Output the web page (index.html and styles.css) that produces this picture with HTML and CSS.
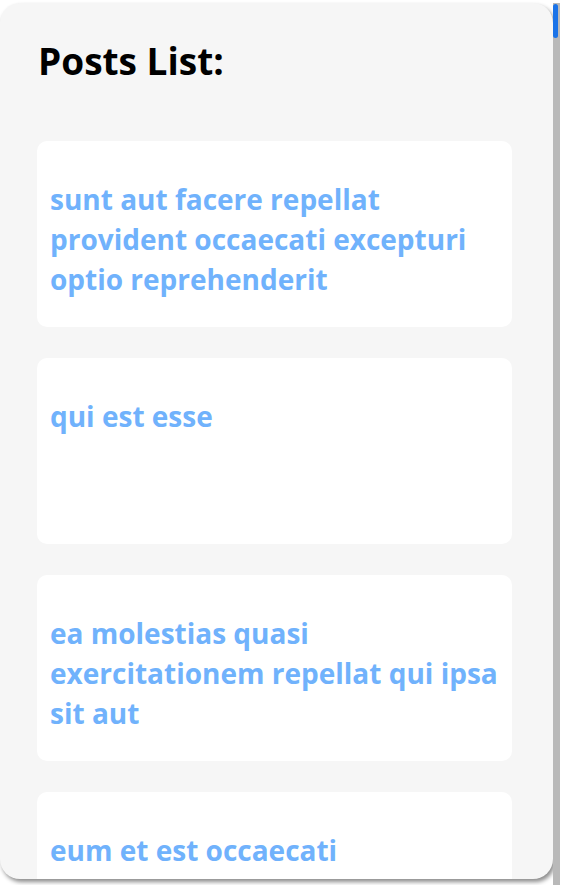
FILE: index.html
```html
<!DOCTYPE html>
<html>
<head>
<meta charset="utf-8">
<link rel="stylesheet" href="styles.css">
</head>
<body>
<div class="screen">
  <main class="frame">
    <h1 class="title">Posts List:</h1>
    <ul class="posts">
      <li class="card"><h3 class="card-title">sunt aut facere repellat provident occaecati excepturi optio reprehenderit</h3></li>
      <li class="card"><h3 class="card-title">qui est esse</h3></li>
      <li class="card"><h3 class="card-title">ea molestias quasi exercitationem repellat qui ipsa sit aut</h3></li>
      <li class="card"><h3 class="card-title">eum et est occaecati</h3></li>
    </ul>
  </main>
  <div class="scrollbar"><div class="thumb"></div></div>
</div>
</body>
</html>
```

FILE: styles.css
```css
html, body {
  margin: 0;
  padding: 0;
  background: #ffffff;
}
body {
  font-family: "Open Sans", "Noto Sans", sans-serif;
  overflow: hidden;
}
.screen {
  display: flex;
  align-items: flex-start;
  padding-top: 3px;
}
.frame {
  width: 553px;
  height: 876px;
  box-sizing: border-box;
  background: #f6f6f6;
  border-radius: 20px;
  box-shadow: 2px 3px 4px rgba(0,0,0,0.45);
  overflow: hidden;
  padding: 0 41px 0 37px;
}
.title {
  margin: 33px 0 0 1px;
  font-size: 37px;
  line-height: 50px;
  font-weight: 700;
  color: #000;
}
.posts {
  list-style: none;
  margin: 55px 0 0 0;
  padding: 0;
  display: flex;
  flex-direction: column;
  gap: 31px;
}
.card {
  height: 186px;
  box-sizing: border-box;
  flex-shrink: 0;
  background: #ffffff;
  border-radius: 10px;
  padding: 38px 13px 0 13px;
}
.card-title {
  margin: 0;
  font-size: 28px;
  line-height: 40px;
  font-weight: 700;
  color: #70b2fc;
}
.scrollbar {
  width: 7px;
  height: 882px;
  background: #b9b9b9;
}
.thumb {
  width: 5px;
  height: 34px;
  margin-top: 1px;
  background: #1a73e8;
  border-radius: 3px;
}
```
